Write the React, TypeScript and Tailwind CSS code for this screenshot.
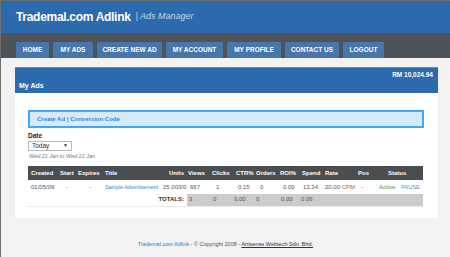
const tabs = [
  { label: 'HOME', w: 'w-[33px]' },
  { label: 'MY ADS', w: 'w-[40px]' },
  { label: 'CREATE NEW AD', w: 'w-[65px]' },
  { label: 'MY ACCOUNT', w: 'w-[57px]' },
  { label: 'MY PROFILE', w: 'w-[54px]' },
  { label: 'CONTACT US', w: 'w-[54px]' },
  { label: 'LOGOUT', w: 'w-[41px]' },
];

const columns = [
  { name: 'Created', w: 'w-[30px]', head: 'pl-[3px]' },
  { name: 'Start', w: 'w-[18px]', head: 'pl-[2px]' },
  { name: 'Expires', w: 'w-[27px]', head: 'pl-[2px]' },
  { name: 'Title', w: 'w-[60px]', head: 'pl-[2px]' },
  { name: 'Units', w: 'w-[24px]', head: 'text-right pr-[3px]' },
  { name: 'Views', w: 'w-[23px]', head: 'pl-[1px]' },
  { name: 'Clicks', w: 'w-[23px]', head: 'pl-[2px]' },
  { name: 'CTR%', w: 'w-[21px]', head: 'pl-[3px]' },
  { name: 'Orders', w: 'w-[24px]', head: 'pl-[2px]' },
  { name: 'ROI%', w: 'w-[22px]', head: 'pl-[2px]' },
  { name: 'Spend', w: 'w-[23px]', head: 'pl-[2px]' },
  { name: 'Rate', w: 'w-[29px]', head: 'pl-[2px]' },
  { name: 'Pos', w: 'w-[23px]', head: 'pl-[6px]' },
  { name: 'Status', w: 'w-[48px]', head: 'pl-[13px]' },
];

const totals = [
  { v: '3', pad: 'pl-[2px]' },
  { v: '0', pad: 'pl-[3px]' },
  { v: '0.00', pad: 'pl-[1px]' },
  { v: '0', pad: 'pl-[2px]' },
  { v: '0.00', pad: 'pl-[3px]' },
  { v: '0.06', pad: 'pl-[1px]' },
];

export default function App() {
  return (
    <div className="w-[450px] h-[257px] overflow-hidden bg-[#f2f2f2] border-t border-l border-[#6f6f6f] font-['Liberation_Sans',Arial,sans-serif]">
      <div className="h-[32px] bg-[#2c6aae] flex items-center pl-[15px] pb-[1px]">
        <span className="text-white font-bold text-[12px] tracking-[-0.3px]">Trademal.com Adlink</span>
        <span className="ml-[5px] text-[#c9d6e6] italic text-[9px]">| Ads Manager</span>
      </div>

      <div className="h-[25px] bg-[#4d5357] flex items-end gap-[4px] pl-[15px]">
        {tabs.map((t) => (
          <div
            key={t.label}
            className={`${t.w} h-[16px] bg-[#4676aa] text-white font-bold text-[6.5px] flex items-center justify-center`}
          >
            {t.label}
          </div>
        ))}
      </div>

      <div className="pt-[9px] pl-[14px] w-[437px]">
        <div className="h-[26px] bg-[#2c6aae] border-t border-[#5d8cc0] flex flex-col justify-between px-[4px] py-[3px] text-white font-bold">
          <div className="text-right text-[6.5px] leading-[8px] pr-[1px]">RM 10,024.94</div>
          <div className="text-[7px] leading-[8px]">My Ads</div>
        </div>

        <div className="bg-white h-[125px] pt-[17px] pl-[13px] pr-[14px]">
          <div className="h-[18px] bg-[#d6eafc] border-2 border-[#3fa9f5] flex items-center pl-[7px] text-[6px] font-bold text-[#2f86d6]">
            Create Ad | Conversion Code
          </div>

          <div className="mt-[4px] text-[6.5px] font-bold text-[#222] leading-[8px]">Date</div>
          <div className="mt-[1px] w-[44px] h-[10px] border border-[#bbb] flex items-center justify-between px-[3px] text-[6.5px] text-[#333]">
            <span>Today</span>
            <span className="text-[5px]">▼</span>
          </div>
          <div className="mt-[2px] italic text-[5.5px] text-[#777] leading-[7px] pl-[1px]">Wed 21 Jan to Wed 21 Jan</div>

          <table className="mt-[6px] table-fixed border-collapse w-[395px] text-[6px]">
            <colgroup>
              {columns.map((c) => (
                <col key={c.name} className={c.w} />
              ))}
            </colgroup>
            <thead>
              <tr className="h-[14px] bg-[#4a4e50] text-white font-bold">
                {columns.map((c) => (
                  <th key={c.name} className={`p-0 font-bold whitespace-nowrap text-left ${c.head}`}>
                    {c.name}
                  </th>
                ))}
              </tr>
            </thead>
            <tbody className="text-[#555]">
              <tr className="h-[14px] whitespace-nowrap">
                <td className="pl-[3px]">01/05/09</td>
                <td className="pl-[8px]">-</td>
                <td className="pl-[13px]">-</td>
                <td className="pl-[2px] text-[#2f8ee0] text-[5.5px] tracking-[-0.1px] overflow-hidden">Sample Advertisement</td>
                <td className="text-right pr-[1px]">25,003/0</td>
                <td className="pl-[3px]">667</td>
                <td className="pl-[6px]">1</td>
                <td className="pl-[5px]">0.15</td>
                <td className="pl-[6px]">0</td>
                <td className="pl-[5px]">0.00</td>
                <td className="pl-[3px]">13.34</td>
                <td className="pl-[2px]">
                  20.00 <span className="text-[#b3603e]">CPM</span>
                </td>
                <td className="pl-[9px]">-</td>
                <td className="pl-[4px]">
                  <span className="text-[#3f9b3f]">Active</span>
                  <span className="ml-[6px] text-[#3b9be0] text-[5.5px]">PAUSE</span>
                </td>
              </tr>
              <tr className="h-[12px] whitespace-nowrap border-b border-[#ececec]">
                <td colSpan={5} className="text-right pr-[3px] font-bold text-[#333]">
                  TOTALS:
                </td>
                {totals.map((t, i) => (
                  <td key={i} className={`bg-[#cccccc] ${t.pad}`}>
                    {t.v}
                  </td>
                ))}
                <td colSpan={3} className="bg-[#cccccc]" />
              </tr>
            </tbody>
          </table>
        </div>
      </div>

      <div className="mt-[22px] text-center text-[5.5px] text-[#555]">
        <span className="text-[#2f7fd0]">Trademal.com Adlink</span> - © Copyright 2008 -{' '}
        <span className="underline text-[#333]">Artisense Webtech Sdn. Bhd.</span>
      </div>
    </div>
  );
}
